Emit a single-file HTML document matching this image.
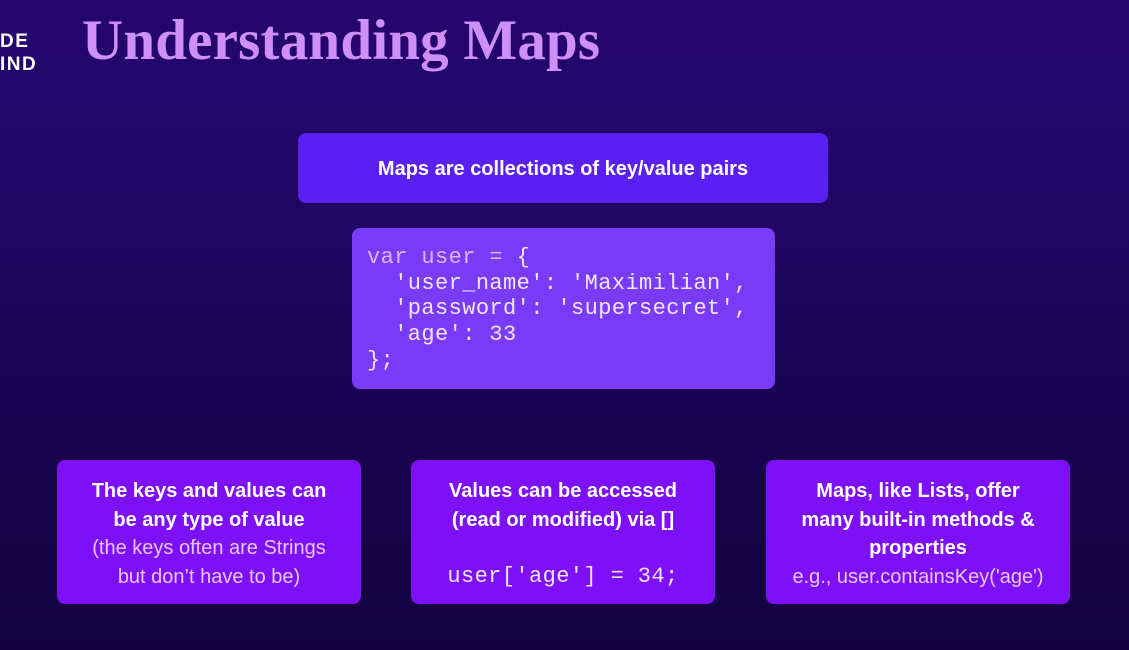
<!DOCTYPE html>
<html><head><meta charset="utf-8"><style>
*{margin:0;padding:0;box-sizing:border-box}
body{width:1129px;height:650px;overflow:hidden;position:relative;
background:linear-gradient(180deg,#25066f 0%,#1e0660 40%,#16044a 75%,#120340 100%);
font-family:"Liberation Sans",sans-serif;color:#fff}
.logo{position:absolute;left:0;top:30px;font-weight:bold;font-size:19px;line-height:23px;letter-spacing:1.5px;color:#fff}
h1{position:absolute;left:82px;top:8px;font-family:"Liberation Serif",serif;font-weight:bold;font-size:57px;color:#cf8ff8;letter-spacing:0.2px}
.box{position:absolute;border-radius:8px;display:flex;flex-direction:column;align-items:center;justify-content:center;text-align:center}
.top{left:298px;top:133px;width:530px;height:70px;background:#5a1ff1;font-weight:bold;font-size:20px;padding-top:2px}
.code{left:352px;top:228px;width:423px;height:161px;background:#7a3bf6;display:block;text-align:left;padding:17px 0 0 15px;font-family:"Liberation Mono",monospace;font-size:22px;line-height:25.7px;letter-spacing:0.4px;white-space:pre;color:#f1e6ff}
.b{top:460px;width:304px;height:144px;background:#7e10f8;font-size:20px;line-height:28.5px;padding-top:4px}
.b b{font-weight:bold}
.lt{color:#e6c6ff}
.mono{font-family:"Liberation Mono",monospace;font-size:22px;letter-spacing:0.4px;color:#f0e6ff}
</style></head><body>
<div class="logo">DE<br>IND</div>
<h1>Understanding Maps</h1>
<div class="box top">Maps are collections of key/value pairs</div>
<div class="box code"><span style="color:#d8b8ff">var user = </span>{
  'user_name': 'Maximilian',
  'password': 'supersecret',
  'age': 33
};</div>
<div class="box b" style="left:57px"><b>The keys and values can</b><b>be any type of value</b><span class="lt">(the keys often are Strings</span><span class="lt">but don’t have to be)</span></div>
<div class="box b" style="left:411px"><b>Values can be accessed</b><b>(read or modified) via []</b><span>&nbsp;</span><span class="mono">user['age'] = 34;</span></div>
<div class="box b" style="left:766px"><b>Maps, like Lists, offer</b><b>many built-in methods &amp;</b><b>properties</b><span class="lt">e.g., user.containsKey('age')</span></div>
</body></html>
